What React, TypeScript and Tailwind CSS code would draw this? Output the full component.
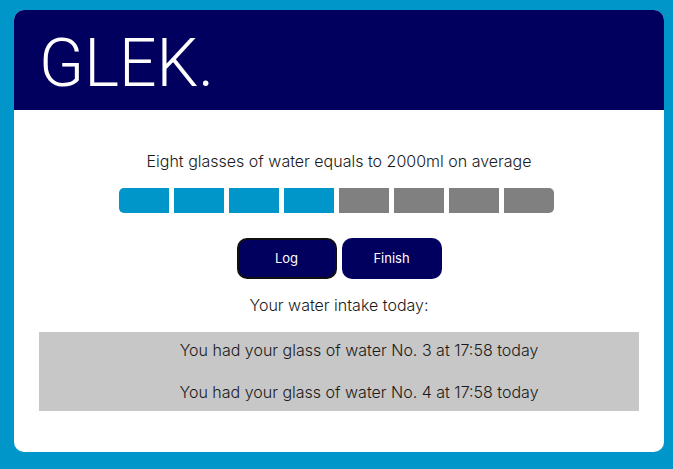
const TOTAL_GLASSES = 8;

const entries = [
  { glass: 3, time: "17:58" },
  { glass: 4, time: "17:58" },
];

function Progress({ filled }: { filled: number }) {
  return (
    <div
      role="progressbar"
      aria-label="Glasses of water"
      aria-valuemin={0}
      aria-valuemax={TOTAL_GLASSES}
      aria-valuenow={filled}
      className="flex justify-center"
    >
      {Array.from({ length: TOTAL_GLASSES }, (_, i) => (
        <div
          key={i}
          className={`mr-[5px] h-[25px] w-[50px] first:rounded-l-[5px] last:rounded-r-[5px] ${
            i < filled ? "bg-[#0096c9]" : "bg-[#808080]"
          }`}
        />
      ))}
    </div>
  );
}

export default function App() {
  return (
    <div className="min-h-screen bg-[#0096c9] pt-[10px] pr-[9px] pb-[17px] pl-[14px] font-['Inter','Liberation_Sans',sans-serif] font-light text-[#1a1a1a]">
      <main className="overflow-hidden rounded-[10px] bg-white">
        <header className="flex h-[100px] items-center bg-[#02005e] px-[25px]">
          <h1 className="pt-2 font-['Roboto','Liberation_Sans',sans-serif] text-[66px] leading-[80px] text-white">
            GLEK.
          </h1>
        </header>
        <section className="px-[25px] pt-10 pb-[41px] text-center text-base">
          <p className="mb-4 leading-[22px]">
            Eight glasses of water equals to 2000ml on average
          </p>
          <Progress filled={4} />
          <div className="mt-[25px] flex justify-center gap-[5px]">
            <button
              type="button"
              className="h-[41px] w-[100px] rounded-[10px] border-2 border-[#101010] bg-[#02005e] text-[13px] font-normal text-white"
            >
              Log
            </button>
            <button
              type="button"
              className="h-[41px] w-[100px] rounded-[10px] border-2 border-[#02005e] bg-[#02005e] text-[13px] font-normal text-white"
            >
              Finish
            </button>
          </div>
          <p className="mt-4 mb-4 leading-[21px]">Your water intake today:</p>
          <ul className="flex flex-col gap-[21px] bg-[#c7c7c7] py-2 pl-10 leading-[21px]">
            {entries.map(({ glass, time }) => (
              <li key={glass}>
                You had your glass of water No. {glass} at {time} today
              </li>
            ))}
          </ul>
        </section>
      </main>
    </div>
  );
}
